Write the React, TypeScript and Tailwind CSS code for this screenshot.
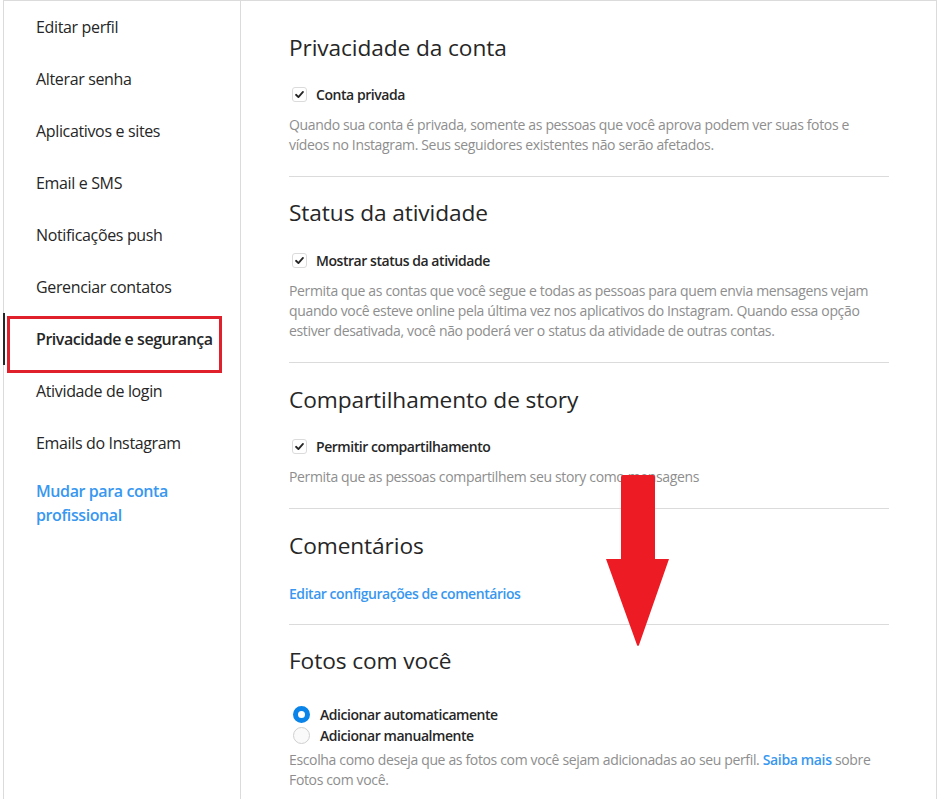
import React from "react";

const font = { fontFamily: '"Open Sans", "Noto Sans", sans-serif' };

function Check() {
  return (
    <span className="inline-flex h-[15px] w-[15px] shrink-0 items-center justify-center rounded-[3px] border border-[#dbdbdb] bg-white">
      <svg width="11" height="11" viewBox="0 0 12 12">
        <path d="M2.2 6.3 L4.8 8.8 L9.8 3.2" fill="none" stroke="#262626" strokeWidth="2" strokeLinecap="round" strokeLinejoin="round" />
      </svg>
    </span>
  );
}

const items = [
  "Editar perfil",
  "Alterar senha",
  "Aplicativos e sites",
  "Email e SMS",
  "Notificações push",
  "Gerenciar contatos",
  "Privacidade e segurança",
  "Atividade de login",
  "Emails do Instagram",
];

const h2 = "text-[22.7px] font-normal leading-[32px] tracking-[-0.1px]";
const label = "text-[14px] font-semibold tracking-[-0.45px]";
const desc = "text-[14px] leading-[20px] tracking-[-0.35px] text-[#8e8e8e]";

export default function App() {
  return (
    <div className="relative h-[799px] w-[941px] overflow-hidden bg-white text-[#262626]" style={font}>
      <div className="ml-[3px] flex h-[820px] w-[934px] border border-[#dbdbdb]">
        <div className="w-[237px] shrink-0 border-r border-[#dbdbdb]">
          {items.map((t) => {
            const active = t === "Privacidade e segurança";
            return (
              <div
                key={t}
                className={
                  "relative flex h-[52px] items-center pl-[32px] text-[16px] leading-[20px] " +
                  (active ? "font-semibold tracking-[-0.45px]" : "tracking-[-0.35px]")
                }
              >
                {active && <span className="absolute left-[-1px] top-0 h-full w-[2px] bg-[#262626]" />}
                <span>{t}</span>
              </div>
            );
          })}
          <div className="pl-[32px] pt-[10px] text-[16px] font-semibold leading-[24px] tracking-[-0.4px] text-[#3897f0]">
            Mudar para conta
            <br />
            profissional
          </div>
        </div>
        <div className="flex-1 pl-[48px]">
          <div className="w-[600px]">
            {/* Section 1 */}
            <div className="border-b border-[#dbdbdb] pb-[21px] pt-[31px]">
              <h2 className={h2}>Privacidade da conta</h2>
              <div className="mt-[20px] flex h-[20px] items-center pl-[3px]">
                <Check />
                <span className={"ml-[9px] " + label}>Conta privada</span>
              </div>
              <p className={"mt-[11px] " + desc}>
                Quando sua conta é privada, somente as pessoas que você aprova podem ver suas fotos e vídeos no
                Instagram. Seus seguidores existentes não serão afetados.
              </p>
            </div>
            {/* Section 2 */}
            <div className="border-b border-[#dbdbdb] pb-[21px] pt-[20px]">
              <h2 className={h2}>Status da atividade</h2>
              <div className="mt-[21px] flex h-[20px] items-center pl-[3px]">
                <Check />
                <span className={"ml-[9px] " + label}>Mostrar status da atividade</span>
              </div>
              <p className={"mt-[11px] " + desc}>
                Permita que as contas que você segue e todas as pessoas para quem envia mensagens vejam quando você
                esteve online pela última vez nos aplicativos do Instagram. Quando essa opção estiver desativada, você
                não poderá ver o status da atividade de outras contas.
              </p>
            </div>
            {/* Section 3 */}
            <div className="border-b border-[#dbdbdb] pb-[21px] pt-[21px]">
              <h2 className={h2}>Compartilhamento de story</h2>
              <div className="mt-[20px] flex h-[20px] items-center pl-[3px]">
                <Check />
                <span className={"ml-[9px] " + label}>Permitir compartilhamento</span>
              </div>
              <p className={"mt-[11px] " + desc}>Permita que as pessoas compartilhem seu story como mensagens</p>
            </div>
            {/* Section 4 */}
            <div className="border-b border-[#dbdbdb] pb-[20px] pt-[21px]">
              <h2 className={h2}>Comentários</h2>
              <div className={"mt-[22px] leading-[20px] text-[#3897f0] " + label}>
                Editar configurações de comentários
              </div>
            </div>
            {/* Section 5 */}
            <div className="pt-[20px]">
              <h2 className={h2}>Fotos com você</h2>
              <div className="mt-[27px] flex h-[21px] items-center pl-[4px]">
                <span className="h-[17px] w-[17px] shrink-0 rounded-full border-[5px] border-[#0a84e8] bg-white" />
                <span className={"ml-[10px] " + label}>Adicionar automaticamente</span>
              </div>
              <div className="flex h-[21px] items-center pl-[4px]">
                <span className="h-[17px] w-[17px] shrink-0 rounded-full border border-[#d0d0d0] bg-[#fafafa]" />
                <span className={"ml-[10px] " + label}>Adicionar manualmente</span>
              </div>
              <p className={"mt-[4px] " + desc}>
                Escolha como deseja que as fotos com você sejam adicionadas ao seu perfil.{" "}
                <span className="font-semibold text-[#3897f0]">Saiba mais</span> sobre Fotos com você.
              </p>
            </div>
          </div>
        </div>
      </div>

      {/* Red highlight box */}
      <div className="absolute left-[7px] top-[316px] h-[57px] w-[215px] border-[3px] border-[#e0202b]" />

      {/* Red arrow */}
      <svg className="absolute left-[606px] top-[474px]" width="64" height="173" viewBox="0 0 64 173">
        <path d="M17 1 H47 Q49 1 49 3 V85 H63 L33 171 Q32 173 31 171 L0 85 H15 V3 Q15 1 17 1 Z" fill="#ed1c24" />
      </svg>
    </div>
  );
}
